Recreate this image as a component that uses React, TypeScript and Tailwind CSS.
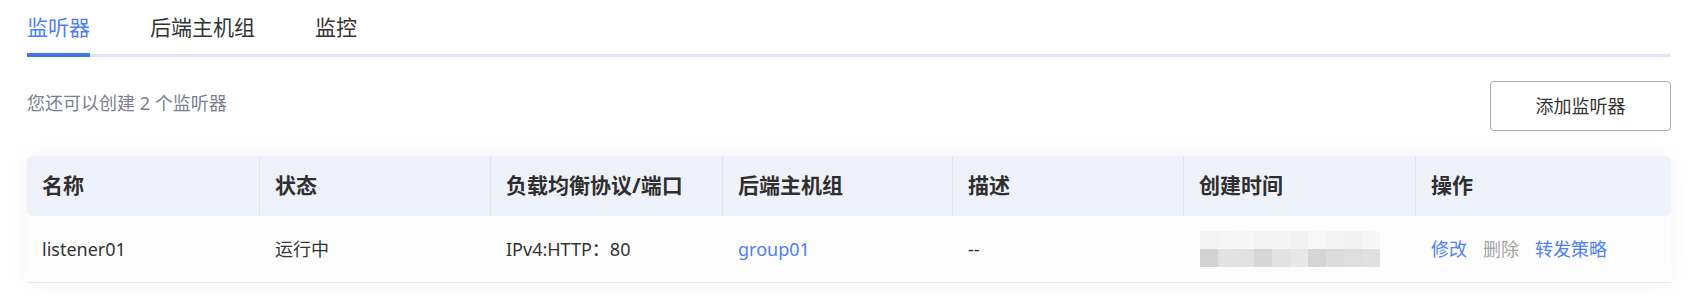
import React from 'react';

const tabs = ['监听器', '后端主机组', '监控'];

const columns = ['名称', '状态', '负载均衡协议/端口', '后端主机组', '描述', '创建时间', '操作'];

const mosaicTop = ['#f4f4f4', '#f6f6f6', '#f7f7f7', '#f3f3f3', '#f5f5f5', '#f1f3f1', '#f8f8f8', '#f5f5f5', '#f2f2f2', '#f7f7f7'];
const mosaicBottom = ['#d5d3d1', '#e2e2e2', '#e1e1e1', '#d7d7d7', '#e2e2e2', '#e8e8e8', '#d5d5d5', '#dcdcdc', '#dedede', '#e0e0e0'];

const BlurredTime: React.FC = () => (
    <div className="flex flex-col">
        <div className="flex">
            {mosaicTop.map((c, i) => (
                <div key={i} className="w-[18px] h-[18px]" style={{ backgroundColor: c }} />
            ))}
        </div>
        <div className="flex">
            {mosaicBottom.map((c, i) => (
                <div key={i} className="w-[18px] h-[18px]" style={{ backgroundColor: c }} />
            ))}
        </div>
    </div>
);

const App: React.FC = () => {
    return (
        <div className="w-[1698px] h-[297px] bg-white px-[27px] text-[#333] font-['Noto_Sans','Noto_Sans_CJK_SC',sans-serif] overflow-hidden">
            {/* tabs */}
            <div className="flex gap-[60px] h-[57px] items-end border-b-[3px] border-[#e2e4ee]">
                {tabs.map((tab, i) => (
                    <div
                        key={tab}
                        className={`-mb-[3px] pb-[12px] text-[21px] leading-[28px] border-b-4 ${i === 0 ? 'border-[#4074f2] text-[#4d7ff7]' : 'border-transparent text-[#333]'}`}
                    >
                        {tab}
                    </div>
                ))}
            </div>

            {/* toolbar */}
            <div className="flex justify-between items-start mt-[24px]">
                <div className="mt-[9px] text-[18px] leading-[26px] text-[#7b7f8c]">您还可以创建 2 个监听器</div>
                <button className="w-[181px] h-[50px] border border-[#a8abb8] rounded-[4px] text-[18px] text-[#333] bg-white">
                    添加监听器
                </button>
            </div>

            {/* table */}
            <div className="mt-[25px] shadow-[0_0_20px_rgba(0,0,0,0.045)]">
                <div className="grid grid-cols-[232px_231px_232px_230px_231px_232px_1fr] h-[60px] bg-[#eff2fb] rounded-[5px]">
                    {columns.map((col, i) => (
                        <div
                            key={col}
                            className={`flex items-center pl-[15px] text-[21px] font-bold text-[#2f2f2f] ${i > 0 ? 'border-l border-[#dfe3ee]' : ''}`}
                        >
                            {col}
                        </div>
                    ))}
                </div>
                <div className="grid grid-cols-[232px_231px_232px_230px_231px_232px_1fr] h-[67px] bg-[#fdfdfe] border-b border-[#e6e8f0] text-[18px] items-center">
                    <div className="pl-[15px]">listener01</div>
                    <div className="pl-[16px]">运行中</div>
                    <div className="pl-[16px]">IPv4:HTTP：80</div>
                    <div className="pl-[16px] text-[#4d7ff7]">group01</div>
                    <div className="pl-[16px]">--</div>
                    <div className="pl-[17px]">
                        <BlurredTime />
                    </div>
                    <div className="pl-[16px] flex gap-[16px]">
                        <span className="text-[#4d7ff7]">修改</span>
                        <span className="text-[#a5a5a5]">删除</span>
                        <span className="text-[#4d7ff7]">转发策略</span>
                    </div>
                </div>
            </div>
        </div>
    );
};

export default App;
